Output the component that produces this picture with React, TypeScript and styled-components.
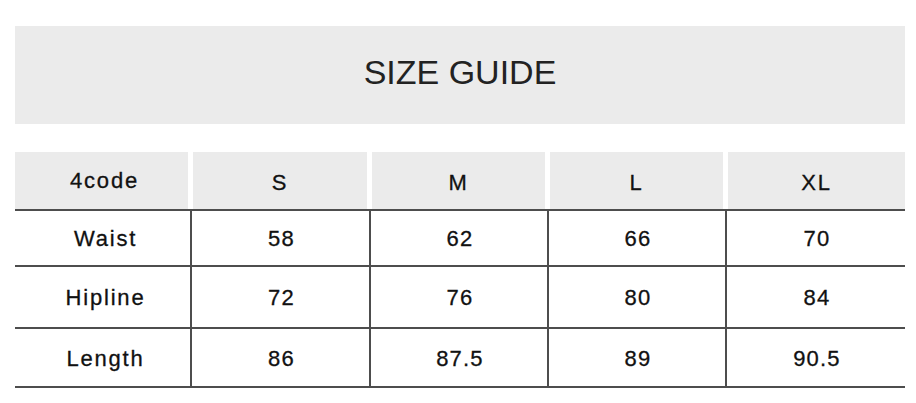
import React, { FC } from 'react'
import styled, { createGlobalStyle } from 'styled-components'

const GlobalStyle = createGlobalStyle`
  html, body {
    margin: 0;
    padding: 0;
    background: #ffffff;
  }
  body {
    font-family: "Liberation Sans", Arial, sans-serif;
    color: #111111;
  }
`

const columns = '175px 179px 178px 178px 180px'
const lineColor = '#4d4d4d'

type Row = {
  label: string
  values: string[]
  height: number
}

const sizes = ['S', 'M', 'L', 'XL']

const rows: Row[] = [
  { label: 'Waist', values: ['58', '62', '66', '70'], height: 54 },
  { label: 'Hipline', values: ['72', '76', '80', '84'], height: 60 },
  { label: 'Length', values: ['86', '87.5', '89', '90.5'], height: 57 },
]

export const App: FC = () => {
  return (
    <Page>
      <GlobalStyle />
      <Banner>
        <Title>SIZE GUIDE</Title>
      </Banner>
      <Table>
        <HeaderRow>
          <HeaderCell>4code</HeaderCell>
          {sizes.map((size) => (
            <HeaderCell key={size} $size>
              {size}
            </HeaderCell>
          ))}
        </HeaderRow>
        {rows.map((row) => (
          <BodyRow key={row.label} $height={row.height}>
            <BodyCell $label>{row.label}</BodyCell>
            {row.values.map((value, i) => (
              <BodyCell key={i}>{value}</BodyCell>
            ))}
          </BodyRow>
        ))}
      </Table>
    </Page>
  )
}

export default App

const Page = styled.div`
  width: 916px;
  height: 403px;
  padding: 26px 11px 0 15px;
  box-sizing: border-box;
  display: flex;
  flex-direction: column;
  gap: 28px;
`

const Banner = styled.div`
  height: 98px;
  background: #ebebeb;
  display: flex;
  align-items: center;
  justify-content: center;
  padding-bottom: 5px;
  box-sizing: border-box;
`

const Title = styled.h1`
  margin: 0;
  font-size: 34px;
  font-weight: 400;
  color: #222222;
`

const Table = styled.div`
  display: flex;
  flex-direction: column;
`

const HeaderRow = styled.div`
  display: grid;
  grid-template-columns: ${columns};
  height: 57px;
  border-bottom: 2px solid ${lineColor};
`

const HeaderCell = styled.div<{ $size?: boolean }>`
  background: #ebebeb;
  display: flex;
  align-items: center;
  justify-content: center;
  font-size: 22px;
  letter-spacing: 1.8px;
  -webkit-text-stroke: 0.3px #111111;
  padding-top: ${(p) => (p.$size ? '4px' : '0')};
  padding-left: ${(p) => (p.$size ? '0' : '6px')};
  box-sizing: border-box;

  &:not(:first-child) {
    margin-left: 3px;
  }
  &:not(:last-child) {
    margin-right: 2px;
  }
`

const BodyRow = styled.div<{ $height: number }>`
  display: grid;
  grid-template-columns: ${columns};
  height: ${(p) => p.$height}px;
  border-bottom: 2px solid ${lineColor};
`

const BodyCell = styled.div<{ $label?: boolean }>`
  display: flex;
  align-items: center;
  justify-content: center;
  font-size: 22px;
  letter-spacing: ${(p) => (p.$label ? '1.8px' : '1.2px')};
  -webkit-text-stroke: 0.3px #111111;
  padding-left: ${(p) => (p.$label ? '6px' : '2px')};
  padding-top: 2px;
  box-sizing: border-box;

  &:not(:first-child) {
    border-left: 2px solid ${lineColor};
  }
`
